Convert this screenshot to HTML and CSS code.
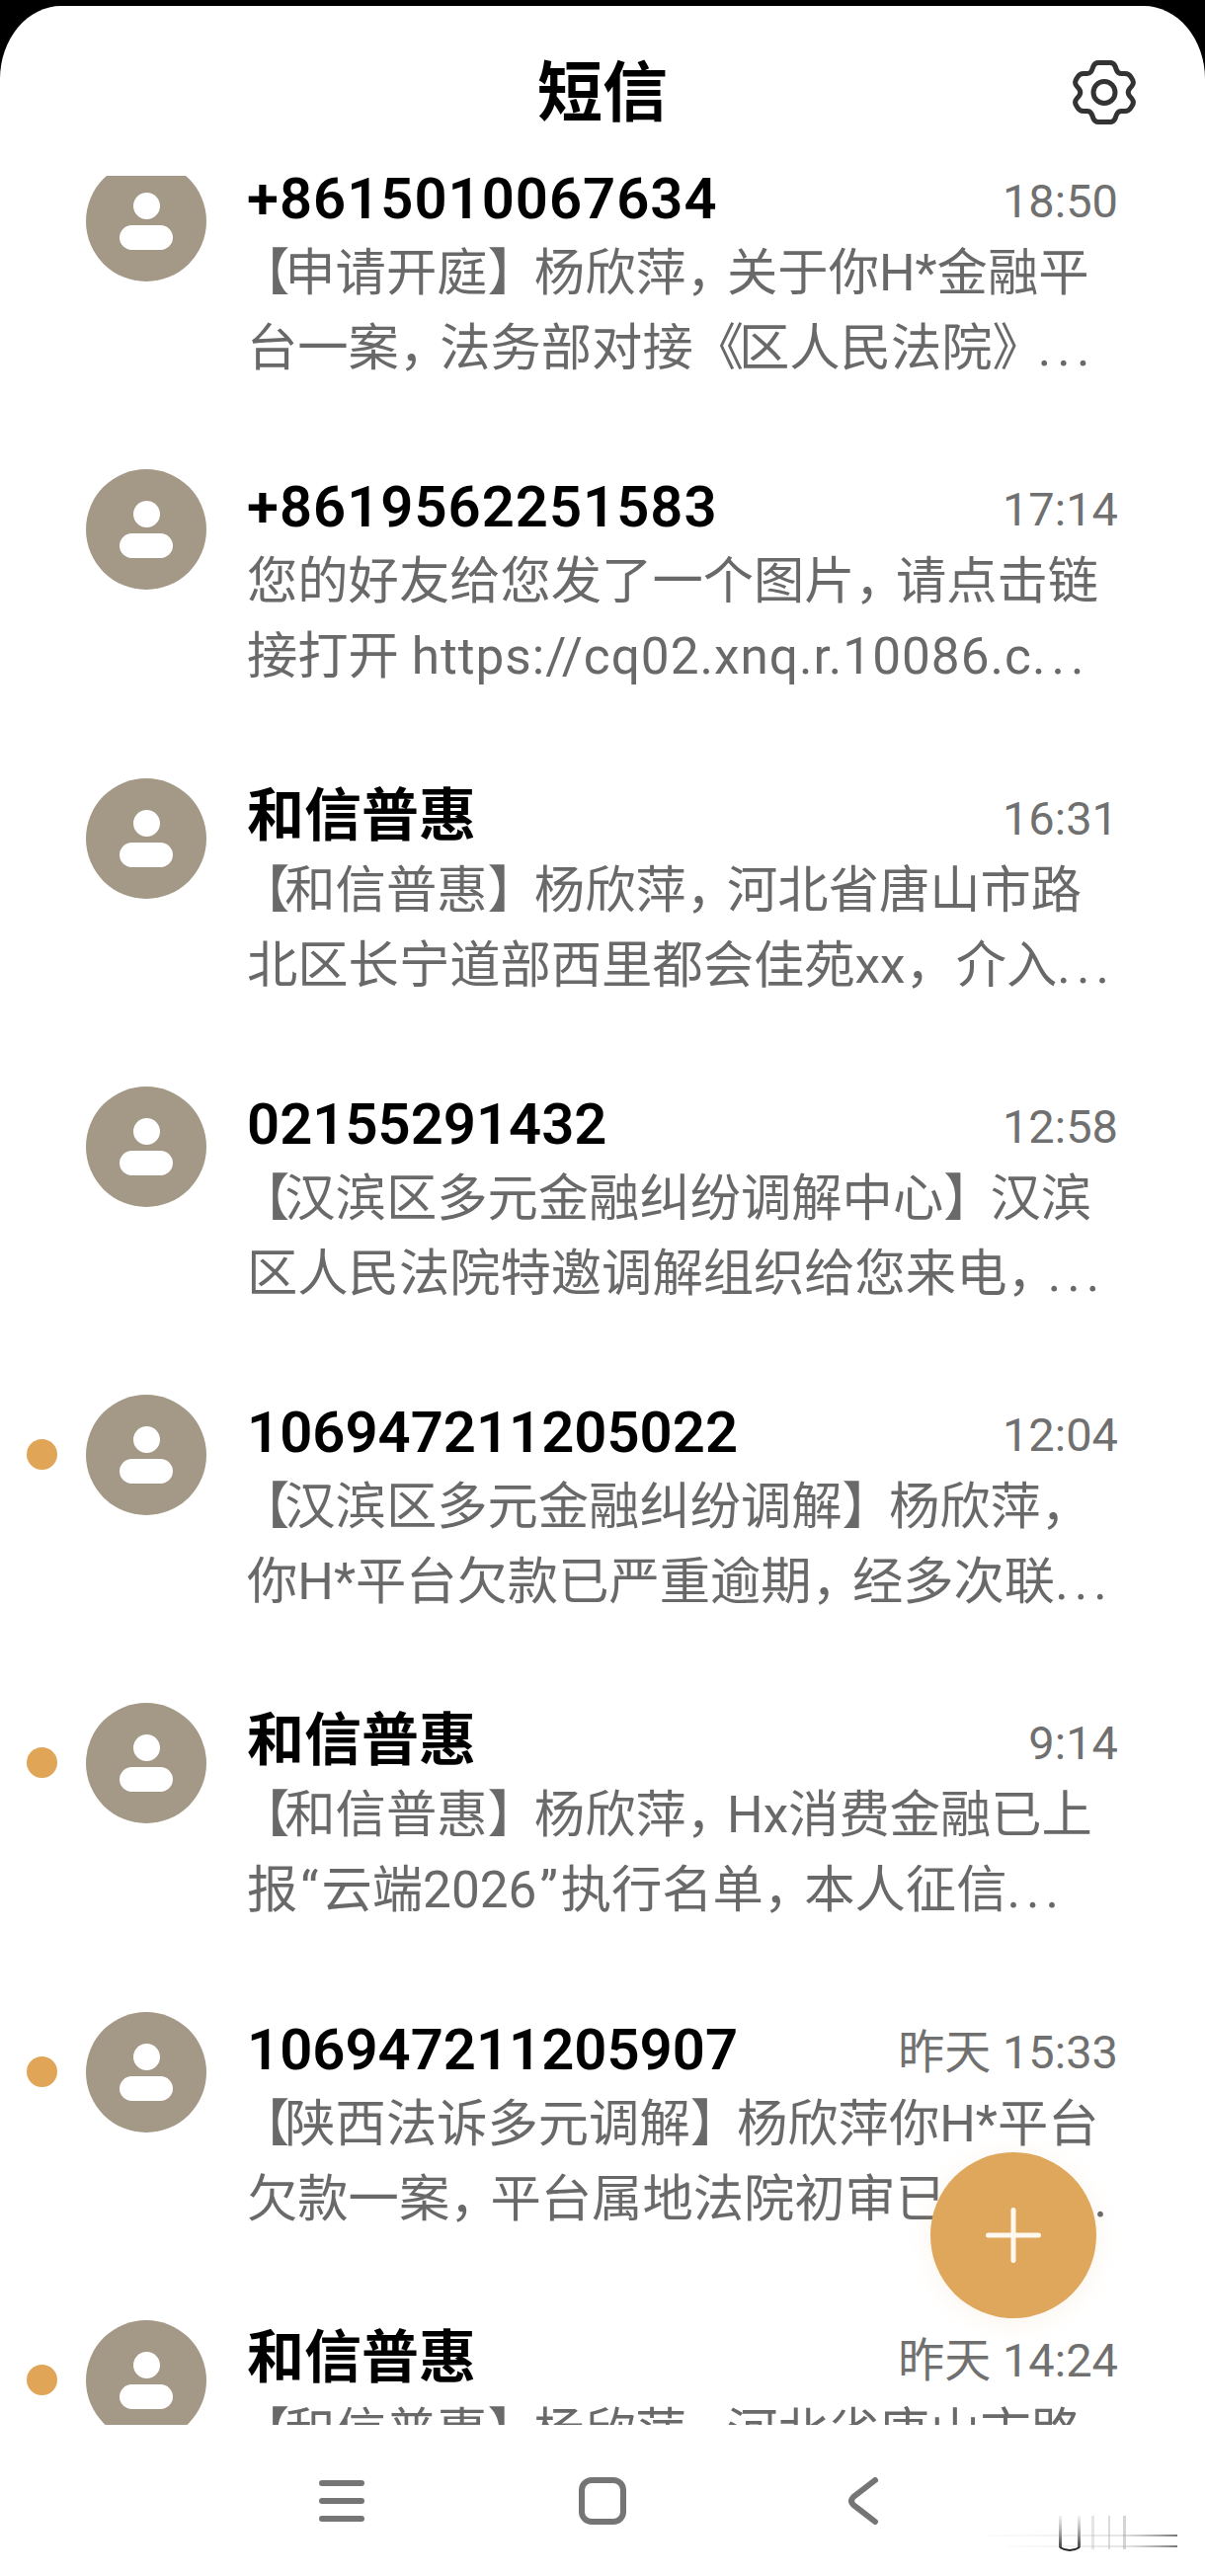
FILE: index.html
```html
<!DOCTYPE html>
<html lang="zh-CN">
<head>
    <meta charset="UTF-8">
    <meta name="viewport" content="width=device-width, initial-scale=1.0">
    <title>短信</title>
    <link rel="stylesheet" href="styles.css">
</head>
<body>
    <div class="app">
        <header class="topbar">
            <h1 class="topbar-title">短信</h1>
            <svg class="gear" viewBox="-3 -3 66 68" aria-label="设置">
                <path d="M24 1.500H36Q39.500 1.500 41 5L42.500 9Q43.800 12.500 47.500 12.500H51Q55 12.500 57 16L58.500 18.500Q60.500 22 58 25L55.500 28Q53 31.500 55.500 35L58 38Q60.500 41 58.500 44.500L57 47Q55 50.500 51 50.500H47.500Q43.800 50.500 42.500 54L41 58Q39.500 61.500 36 61.500H24Q20.500 61.500 19 58L17.500 54Q16.200 50.500 12.500 50.500H9Q5 50.500 3 47L1.500 44.500Q-.5 41 2 38L4.500 35Q7 31.500 4.500 28L2 25Q-.5 22 1.500 18.500L3 16Q5 12.500 9 12.500H12.500Q16.200 12.500 17.500 9L19 5Q20.500 1.500 24 1.500Z"/>
                <circle cx="30" cy="31.500" r="11"/>
            </svg>
        </header>

        <!-- Message list -->
        <main class="list">
            <div class="list-inner">
                <article class="row">
                    <span class="unread"></span>
                    <div class="avatar"></div>
                    <div class="body">
                        <div class="head"><span class="name phone">+8615010067634</span><span class="time">18:50</span></div>
                        <p class="preview"><span class="lb">【</span>申请开庭<span class="rb">】</span>杨欣萍<span class="cm">，</span>关于你H*金融平<br>台一案<span class="cm">，</span>法务部对接<span class="bk">《</span>区人民法院<span class="bk">》</span><span class="more">...</span></p>
                    </div>
                </article>
                <article class="row">
                    <span class="unread"></span>
                    <div class="avatar"></div>
                    <div class="body">
                        <div class="head"><span class="name phone">+8619562251583</span><span class="time">17:14</span></div>
                        <p class="preview">您的好友给您发了一个图片<span class="cm">，</span>请点击链<br>接打开 <span class="url">https://cq02.xnq.r.10086.c</span><span class="more">...</span></p>
                    </div>
                </article>
                <article class="row">
                    <span class="unread"></span>
                    <div class="avatar"></div>
                    <div class="body">
                        <div class="head"><span class="name">和信普惠</span><span class="time">16:31</span></div>
                        <p class="preview"><span class="lb">【</span>和信普惠<span class="rb">】</span>杨欣萍<span class="cm">，</span>河北省唐山市路<br>北区长宁道部西里都会佳苑xx，介入<span class="more">...</span></p>
                    </div>
                </article>
                <article class="row">
                    <span class="unread"></span>
                    <div class="avatar"></div>
                    <div class="body">
                        <div class="head"><span class="name">02155291432</span><span class="time">12:58</span></div>
                        <p class="preview"><span class="lb">【</span>汉滨区多元金融纠纷调解中心<span class="rb">】</span>汉滨<br>区人民法院特邀调解组织给您来电<span class="cm">，</span><span class="more">...</span></p>
                    </div>
                </article>
                <article class="row">
                    <span class="unread on"></span>
                    <div class="avatar"></div>
                    <div class="body">
                        <div class="head"><span class="name">106947211205022</span><span class="time">12:04</span></div>
                        <p class="preview"><span class="lb">【</span>汉滨区多元金融纠纷调解<span class="rb">】</span>杨欣萍，<br>你H*平台欠款已严重逾期<span class="cm">，</span>经多次联<span class="more">...</span></p>
                    </div>
                </article>
                <article class="row">
                    <span class="unread on"></span>
                    <div class="avatar"></div>
                    <div class="body">
                        <div class="head"><span class="name">和信普惠</span><span class="time">9:14</span></div>
                        <p class="preview"><span class="lb">【</span>和信普惠<span class="rb">】</span>杨欣萍<span class="cm">，</span>Hx消费金融已上<br>报<span class="quote">“</span>云端2026<span class="quote">”</span>执行名单<span class="cm">，</span>本人征信<span class="more">...</span></p>
                    </div>
                </article>
                <article class="row">
                    <span class="unread on"></span>
                    <div class="avatar"></div>
                    <div class="body">
                        <div class="head"><span class="name">106947211205907</span><span class="time">昨天 15:33</span></div>
                        <p class="preview"><span class="lb">【</span>陕西法诉多元调解<span class="rb">】</span>杨欣萍你H*平台<br>欠款一案<span class="cm">，</span>平台属地法院初审已<span class="covered"></span><span class="more">...</span></p>
                    </div>
                </article>
                <article class="row">
                    <span class="unread on"></span>
                    <div class="avatar"></div>
                    <div class="body">
                        <div class="head"><span class="name">和信普惠</span><span class="time">昨天 14:24</span></div>
                        <p class="preview"><span class="lb">【</span>和信普惠<span class="rb">】</span>杨欣萍<span class="cm">，</span>河北省唐山市路</p>
                    </div>
                </article>
            </div>
        </main>

        <button class="fab" aria-label="新建">
            <svg viewBox="0 0 56 56"><path d="M28 2.500V53.500M2.500 28H53.500"/></svg>
        </button>

        <nav class="navbar">
            <div class="nav-item">
                <svg class="nav-icon" width="46" height="42" viewBox="0 0 46 42"><path d="M3 3H43M3 21H43M3 39H43"/></svg>
            </div>
            <div class="nav-item">
                <svg class="nav-icon" width="48" height="48" viewBox="0 0 48 48"><rect x="3" y="3" width="42" height="42" rx="10"/></svg>
            </div>
            <div class="nav-item">
                <svg class="nav-icon" width="32" height="48" viewBox="0 0 32 48"><path d="M28 3L6 20Q2 24 6 28L28 45"/></svg>
            </div>
        </nav>

        <!-- blurred watermark in the corner -->
        <svg class="watermark" width="200" height="42" viewBox="0 0 200 42">
            <defs>
                <linearGradient id="fadeUp" x1="0" y1="1" x2="0" y2="0">
                    <stop offset="0" stop-color="#222" stop-opacity=".85"/>
                    <stop offset="1" stop-color="#777" stop-opacity=".1"/>
                </linearGradient>
                <linearGradient id="fadeLeft" x1="1" y1="0" x2="0" y2="0">
                    <stop offset="0" stop-color="#555" stop-opacity=".8"/>
                    <stop offset=".3" stop-color="#999" stop-opacity=".25"/>
                    <stop offset="1" stop-color="#bbb" stop-opacity=".05"/>
                </linearGradient>
            </defs>
            <rect x="77" y="3" width="3" height="32" fill="url(#fadeUp)"/>
            <rect x="96" y="3" width="3" height="32" fill="url(#fadeUp)"/>
            <path d="M78 35Q88 41 98 35" fill="none" stroke="#222" stroke-width="2"/>
            <rect x="110" y="3" width="3" height="34" fill="#999" opacity=".25"/>
            <rect x="127" y="3" width="2" height="34" fill="#888" opacity=".3"/>
            <rect x="142" y="3" width="3" height="34" fill="#888" opacity=".35"/>
            <rect x="5" y="22" width="192" height="2" fill="url(#fadeLeft)"/>
            <rect x="25" y="33" width="172" height="2" fill="url(#fadeLeft)"/>
        </svg>
    </div>
</body>
</html>
```
FILE: styles.css
```css
* {
    box-sizing: border-box;
}
body {
    margin: 0;
    background: #000;
    font-family: Roboto, "Noto Sans CJK SC", sans-serif;
    color: #000;
}
.app {
    position: relative;
    height: 2602px;
    margin-top: 6px;
    background: #fff;
    border-radius: 62px 62px 0 0 / 74px 74px 0 0;
    display: flex;
    flex-direction: column;
    overflow: hidden;
}

/* Top bar */
.topbar {
    height: 172px;
    flex: none;
    display: grid;
    grid-template-columns: 1fr auto 1fr;
    align-items: center;
}
.topbar-title {
    grid-column: 2;
    margin: 0;
    font-size: 66px;
    font-weight: 700;
    line-height: 1;
    padding-top: 6px;
}
.gear {
    grid-column: 3;
    justify-self: end;
    width: 66px;
    height: 68px;
    margin: 1px 69px 0 0;
    fill: none;
    stroke: #333;
    stroke-width: 5;
    stroke-linejoin: round;
}

/* List */
.list {
    flex: 1;
    overflow: hidden;
}
.list-inner {
    margin-top: -15px;
}
.row {
    height: 312.3px;
    display: flex;
    align-items: flex-start;
    padding: 0 88px 0 27px;
}
.unread {
    width: 31px;
    height: 31px;
    flex: none;
    margin: 45px 29px 0 0;
    border-radius: 50%;
}
.unread.on {
    background: #e0a556;
}
.avatar {
    width: 122px;
    height: 122px;
    flex: none;
    margin-right: 41px;
    padding-top: 32px;
    border-radius: 50%;
    background: #a49887;
    display: flex;
    flex-direction: column;
    align-items: center;
    gap: 6px;
}
.avatar::before {
    content: "";
    width: 27px;
    height: 27px;
    border-radius: 50%;
    background: #fff;
}
.avatar::after {
    content: "";
    width: 54px;
    height: 25px;
    border-radius: 12.5px;
    background: #fff;
}
.body {
    flex: 1;
    min-width: 0;
    padding-top: 2px;
}
.head {
    display: flex;
    justify-content: space-between;
    align-items: flex-start;
    height: 74px;
}
.name {
    font-size: 58px;
    font-weight: 600;
    line-height: 72px;
}
.phone {
    letter-spacing: 1px;
}
.time {
    font-size: 47px;
    line-height: 78px;
    color: #707070;
}
.preview {
    margin: 0;
    font-size: 51.3px;
    line-height: 76px;
    color: #696969;
    white-space: nowrap;
}
/* the phone font sets these tighter than Noto does */
.lb {
    margin-left: -8px;
    letter-spacing: -5px;
}
.rb {
    letter-spacing: -4px;
}
.cm {
    letter-spacing: -10px;
}
.bk {
    letter-spacing: -5px;
}
.quote {
    padding: 0 3px;
}
.url {
    letter-spacing: 1px;
}
.more {
    letter-spacing: 6px;
}
.covered {
    display: inline-block;
    width: 2.15em;
}

/* Floating add button */
.fab {
    position: absolute;
    right: 110px;
    bottom: 261px;
    width: 168px;
    height: 168px;
    padding: 0;
    border: 0;
    border-radius: 50%;
    background: #dea75c;
    box-shadow: 0 4px 24px rgba(222, 167, 92, 0.12);
    display: flex;
    align-items: center;
    justify-content: center;
}
.fab svg {
    width: 56px;
    height: 56px;
    fill: none;
    stroke: #fff8ee;
    stroke-width: 5;
    stroke-linecap: round;
}

/* Bottom nav */
.navbar {
    height: 153px;
    flex: none;
    display: flex;
    justify-content: center;
    align-items: center;
}
.nav-item {
    width: 264px;
    display: flex;
    justify-content: center;
}
.nav-icon {
    fill: none;
    stroke: #757575;
    stroke-width: 6;
    stroke-linecap: round;
}
.watermark {
    position: absolute;
    left: 995px;
    top: 2538px;
}
```
